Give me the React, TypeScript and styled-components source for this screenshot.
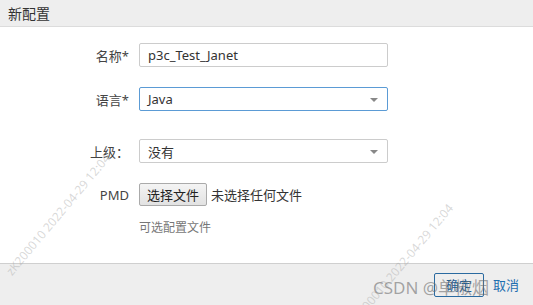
import React from 'react';
import styled, { createGlobalStyle } from 'styled-components';

const GlobalStyle = createGlobalStyle`
  html, body {
    margin: 0;
    padding: 0;
    background: #fff;
  }
  body {
    font-family: 'Noto Sans', 'Noto Sans CJK SC', sans-serif;
    font-size: 13px;
    color: #333;
  }
`;

const Dialog = styled.div`
  position: relative;
  width: 533px;
  height: 305px;
  display: flex;
  flex-direction: column;
  overflow: hidden;
  background: #fff;
`;

const Header = styled.div`
  height: 26px;
  flex: none;
  background: #eeeeee;
  border-bottom: 1px solid #dcdcdc;
  display: flex;
  align-items: center;
  padding-left: 8px;
  font-size: 14px;
  color: #333;
`;

const Body = styled.div`
  flex: 1;
  padding-top: 16px;
`;

const Row = styled.div<{ gap: number }>`
  display: flex;
  align-items: center;
  margin-bottom: ${(p) => p.gap}px;
`;

const Label = styled.div`
  width: 139px;
  padding-right: 10px;
  box-sizing: border-box;
  text-align: right;
  color: #444;
`;

const Field = styled.div<{ focused?: boolean }>`
  position: relative;
  width: 249px;
  height: 24px;
  box-sizing: border-box;
  border: 1px solid ${(p) => (p.focused ? '#5b9bd5' : '#cccccc')};
  border-radius: 2px;
  display: flex;
  align-items: center;
  padding-left: 8px;
  color: #333;
`;

const Arrow = styled.span`
  position: absolute;
  right: 9px;
  top: 10px;
  width: 0;
  height: 0;
  border-left: 4px solid transparent;
  border-right: 4px solid transparent;
  border-top: 4px solid #888;
`;

const FileButton = styled.div`
  height: 23px;
  box-sizing: border-box;
  padding: 0 7px;
  display: flex;
  align-items: center;
  border: 1px solid #aaa;
  border-radius: 2px;
  background: linear-gradient(#f4f4f4, #e2e2e2);
  color: #222;
`;

const FileNote = styled.span`
  margin-left: 4px;
  color: #333;
`;

const Hint = styled.div`
  padding-left: 139px;
  color: #777;
  font-size: 12px;
`;

const Footer = styled.div`
  height: 41px;
  flex: none;
  background: #eeeeee;
  border-top: 1px solid #cfcfcf;
  display: flex;
  align-items: center;
  justify-content: flex-end;
  padding-right: 14px;
  gap: 9px;
`;

const OkButton = styled.div`
  width: 50px;
  height: 24px;
  box-sizing: border-box;
  border: 1px solid #2a6aa0;
  border-radius: 2px;
  display: flex;
  align-items: center;
  justify-content: center;
  color: #1f5f95;
`;

const CancelLink = styled.span`
  color: #1f6fb0;
`;

const Mark = styled.div<{ left: number; top: number }>`
  position: absolute;
  left: ${(p) => p.left}px;
  top: ${(p) => p.top}px;
  transform: rotate(-50deg);
  transform-origin: left top;
  white-space: nowrap;
  color: rgba(170, 170, 170, 0.45);
  font-size: 12px;
  pointer-events: none;
`;

const Brand = styled.div`
  position: absolute;
  left: 373px;
  top: 274px;
  font-size: 17px;
  color: rgba(110, 110, 110, 0.6);
  white-space: nowrap;
  pointer-events: none;
`;

export default function App() {
  return (
    <>
      <GlobalStyle />
      <Dialog>
        <Header>新配置</Header>
        <Body>
          <Row gap={20}>
            <Label>名称*</Label>
            <Field>p3c_Test_Janet</Field>
          </Row>
          <Row gap={28}>
            <Label>语言*</Label>
            <Field focused>
              Java
              <Arrow />
            </Field>
          </Row>
          <Row gap={20}>
            <Label>上级：</Label>
            <Field>
              没有
              <Arrow />
            </Field>
          </Row>
          <Row gap={12}>
            <Label>PMD</Label>
            <FileButton>选择文件</FileButton>
            <FileNote>未选择任何文件</FileNote>
          </Row>
          <Hint>可选配置文件</Hint>
        </Body>
        <Footer>
          <OkButton>确定</OkButton>
          <CancelLink>取消</CancelLink>
        </Footer>
        <Mark left={2} top={268}>zK200010 2022-04-29 12:04</Mark>
        <Mark left={345} top={318}>zK200010 2022-04-29 12:04</Mark>
        <Brand>CSDN @单椒烟</Brand>
      </Dialog>
    </>
  );
}
